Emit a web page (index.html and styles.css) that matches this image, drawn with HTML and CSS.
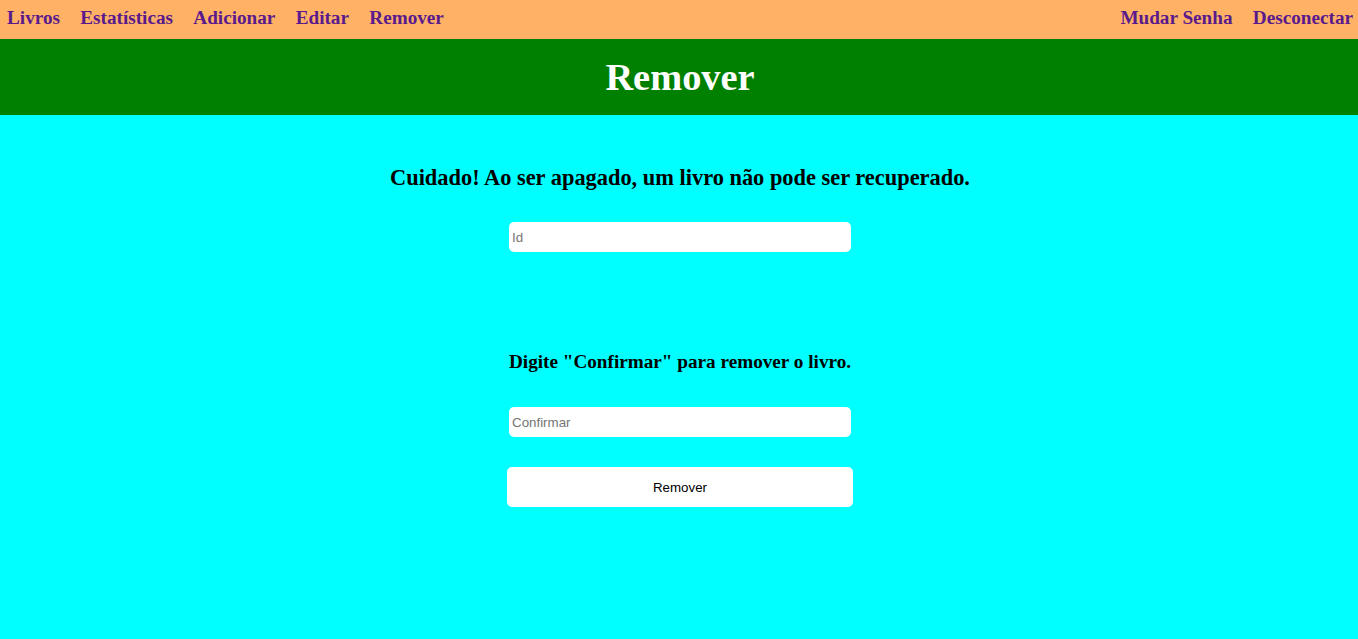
FILE: index.html
```html
<!DOCTYPE html>
<html lang="pt">
<head>
<meta charset="utf-8">
<title>Remover</title>
<link rel="stylesheet" href="styles.css">
</head>
<body>
<nav class="topnav">
  <div class="nav-group">
    <a class="nav-link" href="#">Livros</a>
    <a class="nav-link" href="#">Estatísticas</a>
    <a class="nav-link" href="#">Adicionar</a>
    <a class="nav-link" href="#">Editar</a>
    <a class="nav-link" href="#">Remover</a>
  </div>
  <div class="nav-group">
    <a class="nav-link" href="#">Mudar Senha</a>
    <a class="nav-link" href="#">Desconectar</a>
  </div>
</nav>
<header class="page-header">
  <h1 class="page-title">Remover</h1>
</header>
<main class="content">
  <h2 class="warning">Cuidado! Ao ser apagado, um livro não pode ser recuperado.</h2>
  <input class="field" type="text" placeholder="Id">
  <h3 class="confirm-label">Digite "Confirmar" para remover o livro.</h3>
  <input class="field field-confirm" type="text" placeholder="Confirmar">
  <button class="btn" type="button">Remover</button>
</main>
</body>
</html>
```
FILE: styles.css
```css
html, body {
  margin: 0;
  padding: 0;
  height: 100%;
}
body {
  background: #00ffff;
  font-family: "Liberation Serif", "Times New Roman", serif;
}
.topnav {
  box-sizing: border-box;
  display: flex;
  justify-content: space-between;
  align-items: center;
  height: 39px;
  background: #ffb266;
  padding: 0 5px 3px 7px;
}
.nav-group {
  display: flex;
  gap: 20.3px;
}
.nav-link {
  color: #5a1a8b;
  font-weight: bold;
  font-size: 19.2px;
  text-decoration: none;
}
.page-header {
  background: #008000;
  height: 76px;
  display: flex;
  align-items: center;
  justify-content: center;
}
.page-title {
  margin: 0;
  padding-left: 2px;
  color: #ffffff;
  font-size: 38.4px;
  font-weight: bold;
}
.content {
  display: flex;
  flex-direction: column;
  align-items: center;
  padding-top: 50px;
  padding-left: 2px;
}
.warning {
  margin: 0;
  font-size: 22.4px;
  color: #000;
}
.field {
  box-sizing: border-box;
  width: 342px;
  height: 30px;
  margin-top: 31px;
  border: none;
  border-radius: 5px;
  background: #fff;
  padding: 0 3px;
  font-family: "Liberation Sans", Arial, sans-serif;
  font-size: 13.33px;
}
.field::placeholder {
  color: #757575;
}
.confirm-label {
  margin: 99px 0 0;
  font-size: 19.2px;
  color: #000;
}
.field-confirm {
  margin-top: 34px;
}
.btn {
  box-sizing: border-box;
  width: 346px;
  height: 40px;
  margin-top: 30px;
  border: none;
  border-radius: 5px;
  background: #fff;
  color: #000;
  font-family: "Liberation Sans", Arial, sans-serif;
  font-size: 13.33px;
}
```
